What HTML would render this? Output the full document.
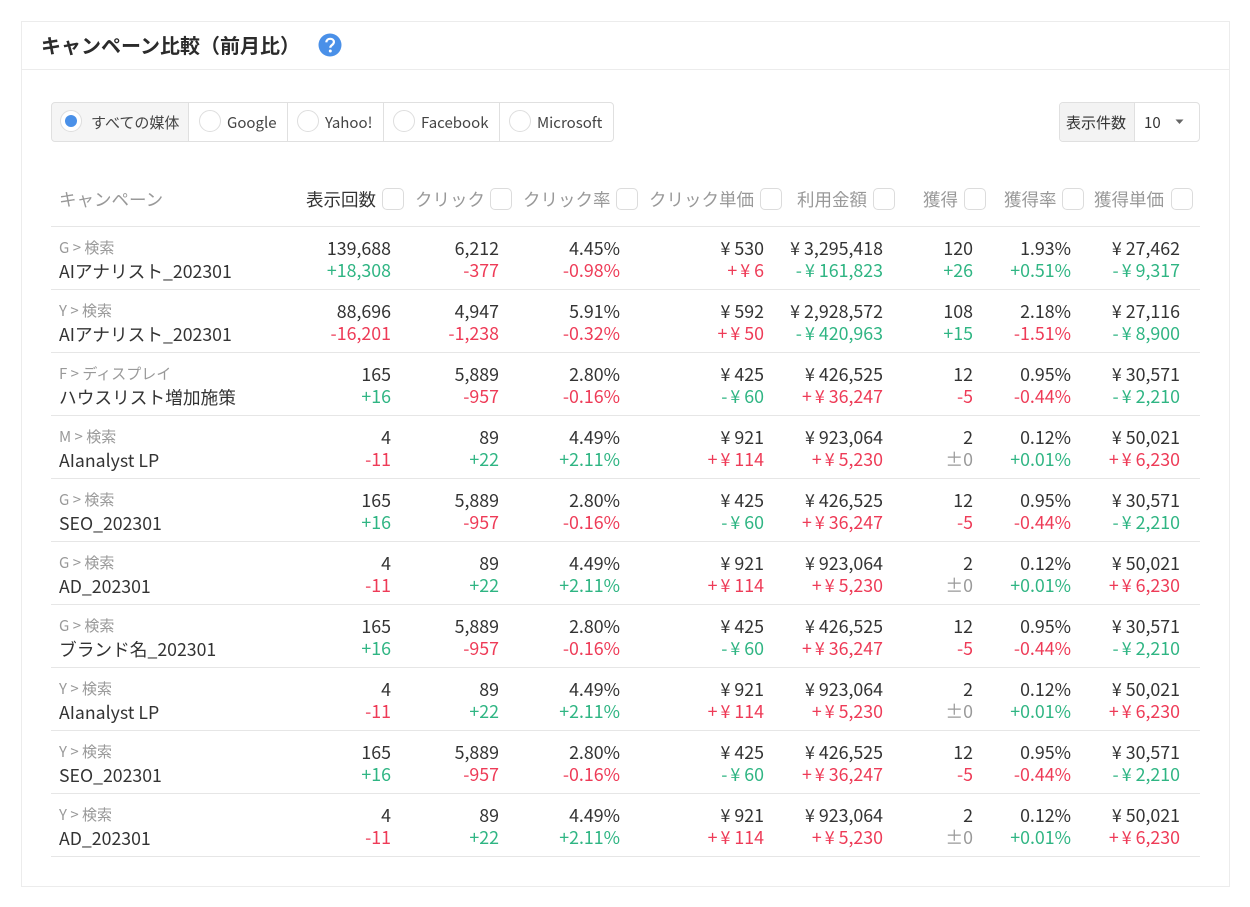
<!DOCTYPE html>
<html lang="ja"><head><meta charset="utf-8"><title>キャンペーン比較</title>
<style>
*{box-sizing:border-box}
html,body{margin:0;padding:0;background:#fff}
body{width:1250px;height:907px;position:relative;overflow:hidden;font-family:"Noto Sans CJK JP",sans-serif;color:#333;font-size:17px}
.a{position:absolute;white-space:nowrap}
.card{left:21px;top:21px;width:1209px;height:866px;border:1px solid #ececec}
.hl{left:21px;top:69px;width:1209px;height:1px;background:#ececec}
.title{left:41px;top:31px;font-size:20px;line-height:28px;font-weight:700;color:#2b2b2b}
.seg{left:51px;top:102px;width:563px;height:40px;border:1px solid #e0e0e0;border-radius:4px}
.seg i{position:absolute;top:0;width:1px;height:38px;background:#e0e0e0}
.sel{left:52px;top:103px;width:137px;height:38px;background:#f5f5f5;border-radius:3px 0 0 3px}
.r{position:absolute;top:110px;width:22px;height:22px;border:1px solid #dedede;border-radius:50%;background:#fff}
.r b{position:absolute;left:4px;top:4px;width:12px;height:12px;border-radius:50%;background:#4a90e8}
.rl{top:111px;font-size:15px;line-height:24px;color:#444}
.cnt{left:1059px;top:102px;width:141px;height:40px;border:1px solid #e0e0e0;border-radius:4px;overflow:hidden}
.cnt s{position:absolute;left:0;top:0;width:75px;height:38px;background:#f3f3f3;border-right:1px solid #e0e0e0}
.th{top:188px;font-size:17.5px;line-height:24px;color:#999}
.cb{position:absolute;top:188px;width:22px;height:22px;border:1px solid #dcdcdc;border-radius:5px;background:#fff}
.line{position:absolute;left:51px;width:1149px;height:1px;background:#e6e6e6}
.row{position:absolute;left:0;width:1250px;height:63px}
.m{position:absolute;left:59px;top:10px;font-size:15px;line-height:22px;color:#999;white-space:nowrap}
.n{position:absolute;left:59px;top:31px;font-size:17.7px;line-height:26px;color:#333;white-space:nowrap}
.v,.d{position:absolute;width:180px;text-align:right;line-height:22px;font-size:17.8px;white-space:nowrap}
.v{top:10px;color:#333}.d{top:31.5px}
.g{color:#2fb583}.e{color:#ee3b57}.z{color:#999}
.y{margin:0 4px 0 3px}
.c1{left:211px}.c2{left:319px}.c3{left:440px}.c4{left:584px}.c5{left:703px}.c6{left:793px}.c7{left:891px}.c8{left:1000px}
</style></head><body>
<div class="a card"></div><div class="a hl"></div>
<div class="a title">キャンペーン比較（前月比）</div>
<svg class="a" style="left:317.500px;top:33px" width="24" height="24" viewBox="0 0 24 24"><circle cx="12" cy="12" r="11.500" fill="#4a90e8"/><path d="M8.300 9.300c.2-2.200 1.800-3.500 3.900-3.500s3.700 1.300 3.700 3.200c0 1.500-.9 2.300-2 3.100-1.100.8-1.600 1.300-1.600 2.600" fill="none" stroke="#fff" stroke-width="2.200"/><circle cx="12.300" cy="18" r="1.500" fill="#fff"/></svg>

<div class="a sel"></div>
<div class="a seg"><i style="left:136px"></i><i style="left:235px"></i><i style="left:331px"></i><i style="left:447px"></i></div>
<div class="r" style="left:60px"><b></b></div><div class="a rl" style="left:91px">すべての媒体</div>
<div class="r" style="left:199px"></div><div class="a rl" style="left:227px">Google</div>
<div class="r" style="left:297px"></div><div class="a rl" style="left:325px">Yahoo!</div>
<div class="r" style="left:393px"></div><div class="a rl" style="left:421px">Facebook</div>
<div class="r" style="left:509px"></div><div class="a rl" style="left:537px">Microsoft</div>

<div class="a cnt"><s></s></div>
<div class="a rl" style="left:1066px;color:#333">表示件数</div>
<div class="a rl" style="left:1144px;color:#333">10</div>
<svg class="a" style="left:1175px;top:119px" width="9" height="6"><path d="M0.500 0.500H8.500L4.500 5z" fill="#666"/></svg>

<div class="a th" style="left:59px">キャンペーン</div>
<div class="a th" style="left:306px;color:#333">表示回数</div><div class="cb" style="left:382px"></div>
<div class="a th" style="left:415px">クリック</div><div class="cb" style="left:490px"></div>
<div class="a th" style="left:523px">クリック率</div><div class="cb" style="left:616px"></div>
<div class="a th" style="left:649px">クリック単価</div><div class="cb" style="left:760px"></div>
<div class="a th" style="left:797px">利用金額</div><div class="cb" style="left:873px"></div>
<div class="a th" style="left:923px">獲得</div><div class="cb" style="left:964px"></div>
<div class="a th" style="left:1004px">獲得率</div><div class="cb" style="left:1062px"></div>
<div class="a th" style="left:1094px">獲得単価</div><div class="cb" style="left:1171px"></div>

<div class="line" style="top:226px"></div><div class="line" style="top:289px"></div><div class="line" style="top:352px"></div><div class="line" style="top:415px"></div><div class="line" style="top:478px"></div><div class="line" style="top:541px"></div><div class="line" style="top:604px"></div><div class="line" style="top:667px"></div><div class="line" style="top:730px"></div><div class="line" style="top:793px"></div><div class="line" style="top:856px"></div>

<div class="row" style="top:227px"><div class="m">G &gt; 検索</div><div class="n">AIアナリスト_202301</div>
<div class="v c1">139,688</div><div class="d c1 g">+18,308</div><div class="v c2">6,212</div><div class="d c2 e">-377</div><div class="v c3">4.45%</div><div class="d c3 e">-0.98%</div><div class="v c4"><span class="y">¥</span>530</div><div class="d c4 e">+<span class="y">¥</span>6</div><div class="v c5"><span class="y">¥</span>3,295,418</div><div class="d c5 g">-<span class="y">¥</span>161,823</div><div class="v c6">120</div><div class="d c6 g">+26</div><div class="v c7">1.93%</div><div class="d c7 g">+0.51%</div><div class="v c8"><span class="y">¥</span>27,462</div><div class="d c8 g">-<span class="y">¥</span>9,317</div></div>

<div class="row" style="top:290px"><div class="m">Y &gt; 検索</div><div class="n">AIアナリスト_202301</div>
<div class="v c1">88,696</div><div class="d c1 e">-16,201</div><div class="v c2">4,947</div><div class="d c2 e">-1,238</div><div class="v c3">5.91%</div><div class="d c3 e">-0.32%</div><div class="v c4"><span class="y">¥</span>592</div><div class="d c4 e">+<span class="y">¥</span>50</div><div class="v c5"><span class="y">¥</span>2,928,572</div><div class="d c5 g">-<span class="y">¥</span>420,963</div><div class="v c6">108</div><div class="d c6 g">+15</div><div class="v c7">2.18%</div><div class="d c7 e">-1.51%</div><div class="v c8"><span class="y">¥</span>27,116</div><div class="d c8 g">-<span class="y">¥</span>8,900</div></div>

<div class="row" style="top:353px"><div class="m">F &gt; ディスプレイ</div><div class="n">ハウスリスト増加施策</div>
<div class="v c1">165</div><div class="d c1 g">+16</div><div class="v c2">5,889</div><div class="d c2 e">-957</div><div class="v c3">2.80%</div><div class="d c3 e">-0.16%</div><div class="v c4"><span class="y">¥</span>425</div><div class="d c4 g">-<span class="y">¥</span>60</div><div class="v c5"><span class="y">¥</span>426,525</div><div class="d c5 e">+<span class="y">¥</span>36,247</div><div class="v c6">12</div><div class="d c6 e">-5</div><div class="v c7">0.95%</div><div class="d c7 e">-0.44%</div><div class="v c8"><span class="y">¥</span>30,571</div><div class="d c8 g">-<span class="y">¥</span>2,210</div></div>

<div class="row" style="top:416px"><div class="m">M &gt; 検索</div><div class="n">AIanalyst LP</div>
<div class="v c1">4</div><div class="d c1 e">-11</div><div class="v c2">89</div><div class="d c2 g">+22</div><div class="v c3">4.49%</div><div class="d c3 g">+2.11%</div><div class="v c4"><span class="y">¥</span>921</div><div class="d c4 e">+<span class="y">¥</span>114</div><div class="v c5"><span class="y">¥</span>923,064</div><div class="d c5 e">+<span class="y">¥</span>5,230</div><div class="v c6">2</div><div class="d c6 z">±0</div><div class="v c7">0.12%</div><div class="d c7 g">+0.01%</div><div class="v c8"><span class="y">¥</span>50,021</div><div class="d c8 e">+<span class="y">¥</span>6,230</div></div>

<div class="row" style="top:479px"><div class="m">G &gt; 検索</div><div class="n">SEO_202301</div>
<div class="v c1">165</div><div class="d c1 g">+16</div><div class="v c2">5,889</div><div class="d c2 e">-957</div><div class="v c3">2.80%</div><div class="d c3 e">-0.16%</div><div class="v c4"><span class="y">¥</span>425</div><div class="d c4 g">-<span class="y">¥</span>60</div><div class="v c5"><span class="y">¥</span>426,525</div><div class="d c5 e">+<span class="y">¥</span>36,247</div><div class="v c6">12</div><div class="d c6 e">-5</div><div class="v c7">0.95%</div><div class="d c7 e">-0.44%</div><div class="v c8"><span class="y">¥</span>30,571</div><div class="d c8 g">-<span class="y">¥</span>2,210</div></div>

<div class="row" style="top:542px"><div class="m">G &gt; 検索</div><div class="n">AD_202301</div>
<div class="v c1">4</div><div class="d c1 e">-11</div><div class="v c2">89</div><div class="d c2 g">+22</div><div class="v c3">4.49%</div><div class="d c3 g">+2.11%</div><div class="v c4"><span class="y">¥</span>921</div><div class="d c4 e">+<span class="y">¥</span>114</div><div class="v c5"><span class="y">¥</span>923,064</div><div class="d c5 e">+<span class="y">¥</span>5,230</div><div class="v c6">2</div><div class="d c6 z">±0</div><div class="v c7">0.12%</div><div class="d c7 g">+0.01%</div><div class="v c8"><span class="y">¥</span>50,021</div><div class="d c8 e">+<span class="y">¥</span>6,230</div></div>

<div class="row" style="top:605px"><div class="m">G &gt; 検索</div><div class="n">ブランド名_202301</div>
<div class="v c1">165</div><div class="d c1 g">+16</div><div class="v c2">5,889</div><div class="d c2 e">-957</div><div class="v c3">2.80%</div><div class="d c3 e">-0.16%</div><div class="v c4"><span class="y">¥</span>425</div><div class="d c4 g">-<span class="y">¥</span>60</div><div class="v c5"><span class="y">¥</span>426,525</div><div class="d c5 e">+<span class="y">¥</span>36,247</div><div class="v c6">12</div><div class="d c6 e">-5</div><div class="v c7">0.95%</div><div class="d c7 e">-0.44%</div><div class="v c8"><span class="y">¥</span>30,571</div><div class="d c8 g">-<span class="y">¥</span>2,210</div></div>

<div class="row" style="top:668px"><div class="m">Y &gt; 検索</div><div class="n">AIanalyst LP</div>
<div class="v c1">4</div><div class="d c1 e">-11</div><div class="v c2">89</div><div class="d c2 g">+22</div><div class="v c3">4.49%</div><div class="d c3 g">+2.11%</div><div class="v c4"><span class="y">¥</span>921</div><div class="d c4 e">+<span class="y">¥</span>114</div><div class="v c5"><span class="y">¥</span>923,064</div><div class="d c5 e">+<span class="y">¥</span>5,230</div><div class="v c6">2</div><div class="d c6 z">±0</div><div class="v c7">0.12%</div><div class="d c7 g">+0.01%</div><div class="v c8"><span class="y">¥</span>50,021</div><div class="d c8 e">+<span class="y">¥</span>6,230</div></div>

<div class="row" style="top:731px"><div class="m">Y &gt; 検索</div><div class="n">SEO_202301</div>
<div class="v c1">165</div><div class="d c1 g">+16</div><div class="v c2">5,889</div><div class="d c2 e">-957</div><div class="v c3">2.80%</div><div class="d c3 e">-0.16%</div><div class="v c4"><span class="y">¥</span>425</div><div class="d c4 g">-<span class="y">¥</span>60</div><div class="v c5"><span class="y">¥</span>426,525</div><div class="d c5 e">+<span class="y">¥</span>36,247</div><div class="v c6">12</div><div class="d c6 e">-5</div><div class="v c7">0.95%</div><div class="d c7 e">-0.44%</div><div class="v c8"><span class="y">¥</span>30,571</div><div class="d c8 g">-<span class="y">¥</span>2,210</div></div>

<div class="row" style="top:794px"><div class="m">Y &gt; 検索</div><div class="n">AD_202301</div>
<div class="v c1">4</div><div class="d c1 e">-11</div><div class="v c2">89</div><div class="d c2 g">+22</div><div class="v c3">4.49%</div><div class="d c3 g">+2.11%</div><div class="v c4"><span class="y">¥</span>921</div><div class="d c4 e">+<span class="y">¥</span>114</div><div class="v c5"><span class="y">¥</span>923,064</div><div class="d c5 e">+<span class="y">¥</span>5,230</div><div class="v c6">2</div><div class="d c6 z">±0</div><div class="v c7">0.12%</div><div class="d c7 g">+0.01%</div><div class="v c8"><span class="y">¥</span>50,021</div><div class="d c8 e">+<span class="y">¥</span>6,230</div></div>
</body></html>
